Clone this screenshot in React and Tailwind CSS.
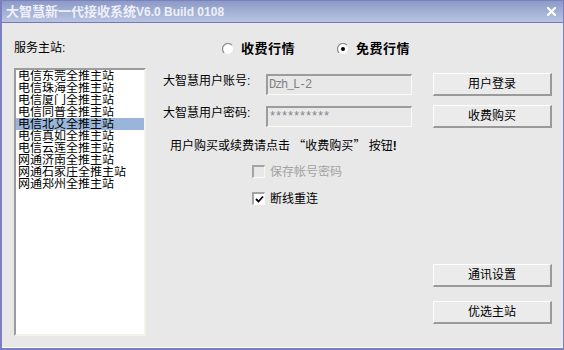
import React from "react";

const stations = [
  "电信东莞全推主站",
  "电信珠海全推主站",
  "电信厦门全推主站",
  "电信同普全推主站",
  "电信北艾全推主站",
  "电信真如全推主站",
  "电信云莲全推主站",
  "网通济南全推主站",
  "网通石家庄全推主站",
  "网通郑州全推主站",
];

function Radio({ checked }) {
  return (
    <svg width="12" height="12" viewBox="0 0 12 12" className="shrink-0">
      <circle cx="6" cy="6" r="5.5" fill="#ffffff" stroke="#e4e4e4" strokeWidth="1" />
      <path d="M2.11 9.89 A5.5 5.5 0 0 1 9.89 2.11" fill="none" stroke="#8a8a8a" strokeWidth="1.2" />
      {checked && <circle cx="6" cy="6" r="2" fill="#000000" />}
    </svg>
  );
}

function Button({ children, className = "" }) {
  return (
    <div
      className={
        "h-[23px] w-[119px] flex items-center justify-center bg-[#ebebeb] border-t border-l border-t-white border-l-white border-r-2 border-b-2 border-r-[#9a9a9a] border-b-[#9a9a9a] text-[12px] leading-[14px] text-black " +
        className
      }
    >
      {children}
    </div>
  );
}

function Input({ value }) {
  return (
    <div className="h-[21px] w-[146px] bg-[#e8e8e8] border-t-2 border-l-2 border-t-[#9c9c9c] border-l-[#9c9c9c] border-r border-b border-r-[#fafaf4] border-b-[#fafaf4] flex items-center pl-[1px]">
      <span className="font-mono text-[12px] tracking-[-1.2px] text-[#808080] leading-[14px]">{value}</span>
    </div>
  );
}

export default function App() {
  return (
    <div className="w-[564px] h-[350px] flex flex-col border-t border-r border-l-2 border-b-2 border-[#7c80c0] font-[family-name:'Liberation_Sans','Noto_Sans_CJK_SC',sans-serif] text-black select-none">
      {/* Title bar */}
      <div className="h-[22px] shrink-0 flex items-center justify-between pl-[4px] pr-[7px] border-b border-[#7379b6] bg-gradient-to-b from-[#8c9ac6] to-[#b9c4e3]">
        <div className="font-bold text-[#eef0f9] leading-[14px] whitespace-nowrap">
          <span className="text-[13px]">大智慧新一代接收系统</span>
          <span className="text-[12px]">V6.0 Build 0108</span>
        </div>
        <svg width="9" height="9" viewBox="0 0 9 9">
          <path d="M1 1 L8 8 M8 1 L1 8" stroke="#ffffff" strokeWidth="2.2" strokeLinecap="square" />
        </svg>
      </div>

      {/* Body */}
      <div className="flex-1 flex bg-[#e8e8e8] border-b border-[#fbfbf2]">
        {/* Left column */}
        <div className="ml-[12px] w-[132px] pt-[18px] flex flex-col">
          <div className="text-[12px] leading-[14px] h-[14px]">服务主站:</div>
          <div className="mt-[13px] h-[268px] bg-white border-t-2 border-l-2 border-t-[#9c9c9c] border-l-[#9c9c9c] border-r-2 border-b-2 border-r-[#f3f3eb] border-b-[#f3f3eb] flex flex-col">
            {stations.map((s, i) => (
              <div
                key={s}
                className={
                  "h-[12px] leading-[12px] pl-[2px] text-[12px] whitespace-nowrap overflow-hidden " +
                  (i === 4 ? "bg-[#9ab5da]" : "")
                }
              >
                {s}
              </div>
            ))}
          </div>
        </div>

        {/* Right area */}
        <div className="flex-1 flex flex-col pt-[18px]">
          {/* Radio row */}
          <div className="h-[16px] flex items-center pl-[76px]">
            <div className="flex items-center gap-[7px]">
              <Radio checked={false} />
              <span className="font-bold text-[13px] tracking-[0.5px] leading-[16px]">收费行情</span>
            </div>
            <div className="flex items-center gap-[7px] ml-[42px]">
              <Radio checked={true} />
              <span className="font-bold text-[13px] tracking-[0.5px] leading-[16px]">免费行情</span>
            </div>
          </div>

          <div className="mt-[16px] flex flex-1">
            {/* Middle form */}
            <div className="flex-1 flex flex-col pt-[1px]">
              <div className="flex items-start pl-[17px]">
                <div className="w-[103px] text-[12px] leading-[14px] whitespace-nowrap">大智慧用户账号:</div>
                <Input value="Dzh_L-2" />
              </div>
              <div className="flex items-start pl-[17px] mt-[11px]">
                <div className="w-[103px] text-[12px] leading-[14px] whitespace-nowrap">大智慧用户密码:</div>
                <Input value="**********" />
              </div>
              <div className="mt-[11px] pl-[24px] text-[12px] leading-[14px] h-[14px] whitespace-nowrap">
                用户购买或续费请点击 <span className="font-[family-name:'Noto_Sans_CJK_SC',sans-serif]">“</span>收费购买<span className="font-[family-name:'Noto_Sans_CJK_SC',sans-serif]">”</span> 按钮<span className="font-bold">!</span>
              </div>
              <div className="mt-[13px] pl-[106px] flex items-center gap-[5px] h-[13px]">
                <div className="w-[13px] h-[13px] bg-[#e8e8e8] border-t-2 border-l-2 border-t-[#a4a4a4] border-l-[#a4a4a4] border-r border-b border-r-[#fafaf4] border-b-[#fafaf4]" />
                <span className="text-[12px] leading-[14px] text-[#a2a2a2]">保存帐号密码</span>
              </div>
              <div className="mt-[14px] pl-[106px] flex items-center gap-[5px] h-[13px]">
                <div className="w-[13px] h-[13px] bg-white border-t-2 border-l-2 border-t-[#a4a4a4] border-l-[#a4a4a4] border-r border-b border-r-[#fafaf4] border-b-[#fafaf4] flex items-center justify-center">
                  <svg width="9" height="9" viewBox="0 0 9 9">
                    <path d="M1 4 L3.5 6.5 L8 1.5" fill="none" stroke="#000000" strokeWidth="1.8" />
                  </svg>
                </div>
                <span className="text-[12px] leading-[14px]">断线重连</span>
              </div>
            </div>

            {/* Buttons */}
            <div className="w-[119px] mr-[11px] flex flex-col">
              <Button>用户登录</Button>
              <Button className="mt-[9px]">收费购买</Button>
              <Button className="mt-[136px]">通讯设置</Button>
              <Button className="mt-[14px]">优选主站</Button>
            </div>
          </div>
        </div>
      </div>
    </div>
  );
}
